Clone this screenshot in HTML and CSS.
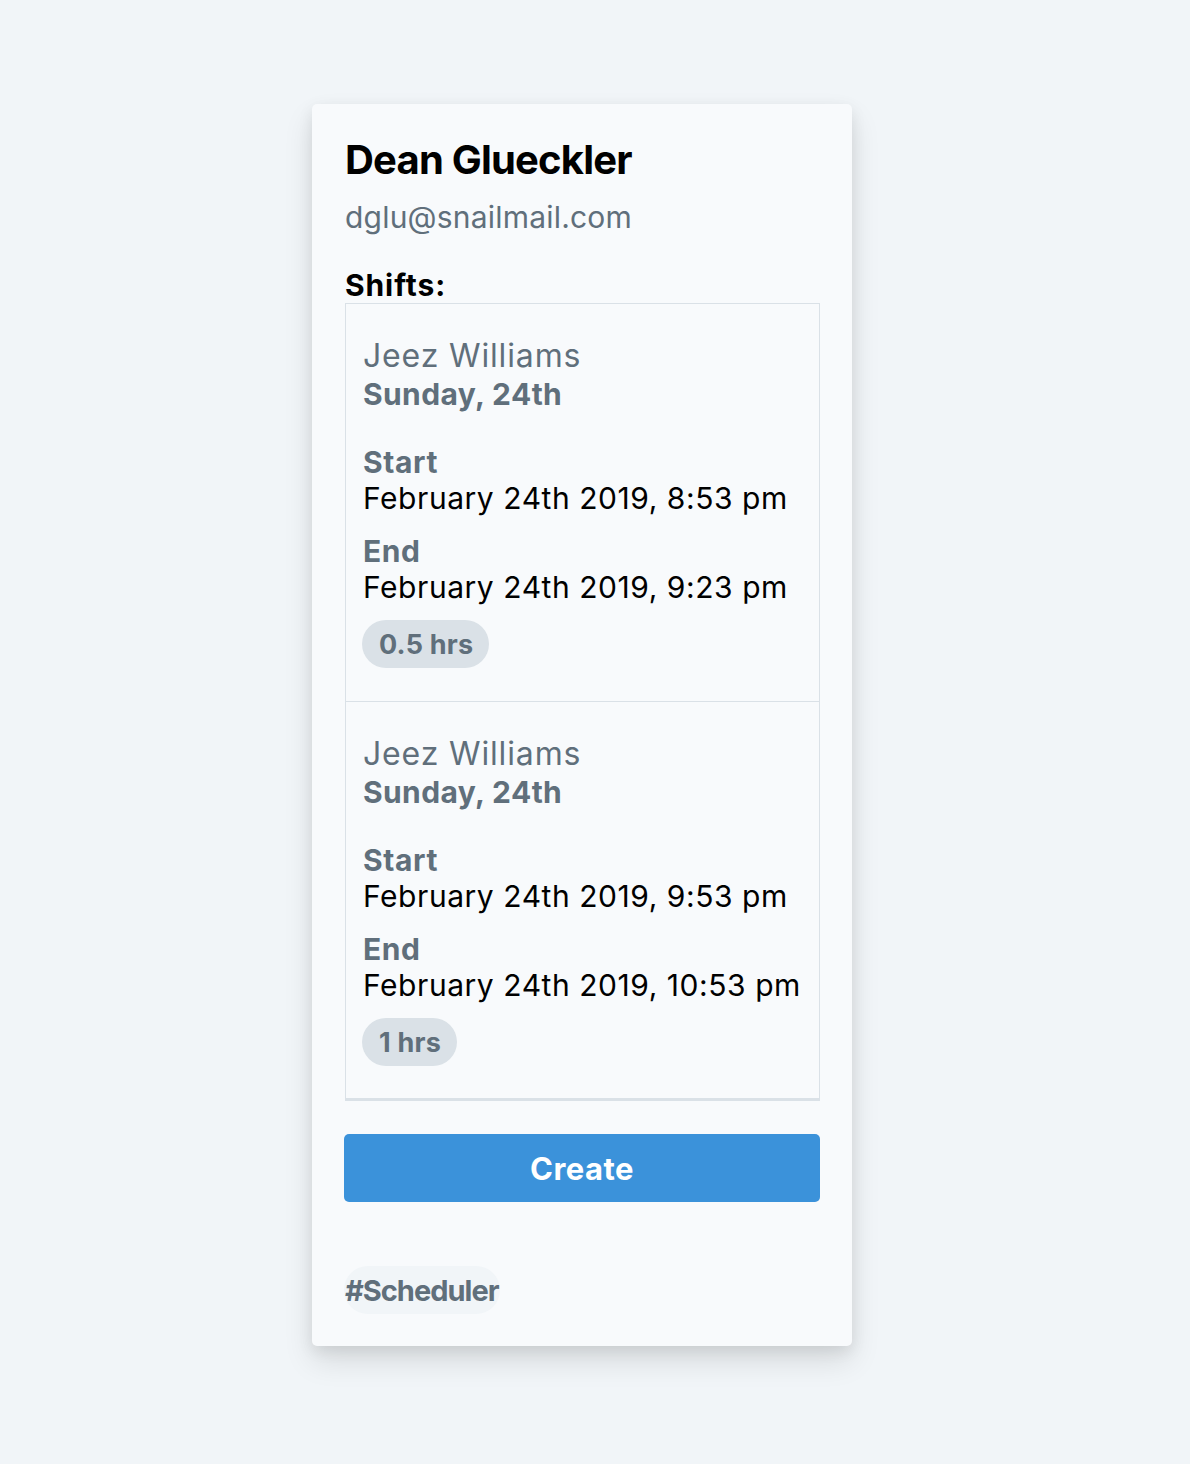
FILE: index.html
```html
<!DOCTYPE html>
<html>
<head>
<meta charset="utf-8">
<link rel="stylesheet" href="styles.css">
</head>
<body>
<main class="page">
  <section class="card">
    <h1 class="name">Dean Glueckler</h1>
    <p class="email">dglu@snailmail.com</p>
    <h2 class="shifts-title">Shifts:</h2>
    <ul class="shifts">
      <li class="shift">
        <div class="who">Jeez Williams</div>
        <div class="day">Sunday, 24th</div>
        <div class="group first">
          <div class="label">Start</div>
          <div class="value">February 24th 2019, 8:53 pm</div>
        </div>
        <div class="group">
          <div class="label">End</div>
          <div class="value">February 24th 2019, 9:23 pm</div>
        </div>
        <span class="badge">0.5 hrs</span>
      </li>
      <li class="shift">
        <div class="who">Jeez Williams</div>
        <div class="day">Sunday, 24th</div>
        <div class="group first">
          <div class="label">Start</div>
          <div class="value">February 24th 2019, 9:53 pm</div>
        </div>
        <div class="group">
          <div class="label">End</div>
          <div class="value">February 24th 2019, 10:53 pm</div>
        </div>
        <span class="badge">1 hrs</span>
      </li>
    </ul>
    <button class="create">Create</button>
    <div class="tags"><span class="tag">#Scheduler</span></div>
  </section>
</main>
</body>
</html>
```

FILE: styles.css
```css
* { box-sizing: border-box; }
html, body { margin: 0; padding: 0; }
body {
  background: #f1f5f8;
  font-family: Inter, "Noto Sans", "Liberation Sans", sans-serif;
  color: #000;
  min-height: 1464px;
}
.page {
  display: flex;
  padding: 104px 0 0 312px;
}
.card {
  width: 540px;
  background: #f8fafc;
  border-radius: 5px;
  padding: 32px 32px 32px 32px;
  box-shadow: 0 15px 30px 0 rgba(0,0,0,0.11), 0 5px 15px 0 rgba(0,0,0,0.08);
}
.name {
  margin: 0;
  font-size: 40px;
  line-height: 48px;
  font-weight: 700;
  letter-spacing: -0.8px;
  padding-left: 1px;
}
.email {
  margin: 15px 0 0 1px;
  font-size: 30px;
  line-height: 36px;
  letter-spacing: 0.2px;
  color: #606f7b;
}
.shifts-title {
  margin: 32px 0 0 1px;
  font-size: 30px;
  line-height: 36px;
  font-weight: 700;
  letter-spacing: 0.9px;
}
.shifts {
  list-style: none;
  margin: 0 0 0 1px;
  padding: 0;
  border: 1px solid #dae1e7;
  border-bottom-width: 2px;
}
.shift {
  padding: 33px 17px 33px 17px;
  border-bottom: 1px solid #dae1e7;
  display: flex;
  flex-direction: column;
  align-items: flex-start;
}
.shift:last-child { padding-bottom: 32px; }
.who {
  font-size: 32px;
  line-height: 38px;
  letter-spacing: 0.85px;
  color: #606f7b;
}
.day {
  font-size: 30px;
  line-height: 38px;
  font-weight: 700;
  letter-spacing: 0.4px;
  color: #606f7b;
}
.group { margin-top: 17px; }
.group.first { margin-top: 31px; }
.label {
  font-size: 30px;
  line-height: 36px;
  font-weight: 700;
  letter-spacing: 0.6px;
  color: #606f7b;
}
.value {
  font-size: 30px;
  line-height: 36px;
  letter-spacing: 0.55px;
  white-space: nowrap;
}
.badge {
  margin-top: 15px;
  margin-left: -1px;
  height: 48px;
  display: inline-flex;
  align-items: center;
  padding: 0 16px 0 17px;
  border-radius: 999px;
  background: #dae1e7;
  color: #606f7b;
  font-size: 27px;
  font-weight: 700;
  letter-spacing: 0.2px;
}
.create {
  display: block;
  width: 100%;
  margin-top: 33px;
  height: 68px;
  border: 0;
  border-radius: 5px;
  background: #3b92da;
  color: #fff;
  font-family: inherit;
  font-size: 31px;
  font-weight: 700;
  letter-spacing: 0.5px;
}
.tags {
  margin-top: 64px;
  display: flex;
}
.tag {
  height: 48px;
  display: inline-flex;
  align-items: center;
  padding: 0 2px 0 1px;
  border-radius: 999px;
  background: #f1f5f8;
  color: #606f7b;
  font-size: 29px;
  font-weight: 700;
  letter-spacing: -1px;
}
```
